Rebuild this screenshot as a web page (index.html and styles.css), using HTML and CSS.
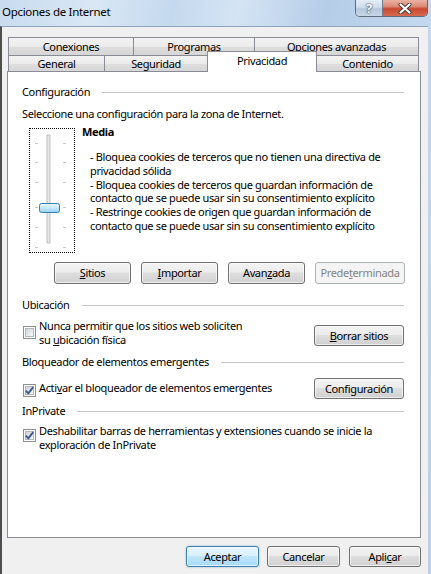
FILE: index.html
```html
<!DOCTYPE html>
<html lang="es">
<head>
<meta charset="utf-8">
<title>Opciones de Internet</title>
<link rel="stylesheet" href="styles.css">
</head>
<body>
<div class="window">
  <div class="titlebar">
    <span class="title">Opciones de Internet</span>
    <div class="caption-buttons">
      <div class="cap help">?</div>
      <div class="cap close">
        <svg width="14" height="11" viewBox="0 0 14 11">
          <path d="M2.5 1.5 L11.5 9.5 M11.5 1.5 L2.5 9.5" stroke="#3a3a3a" stroke-width="4" stroke-linecap="round"/>
          <path d="M2.5 1.5 L11.5 9.5 M11.5 1.5 L2.5 9.5" stroke="#ffffff" stroke-width="2.2" stroke-linecap="round"/>
        </svg>
      </div>
    </div>
  </div>
  <div class="client">
    <div class="tabs">
      <div class="tabrow back">
        <div class="tab t-con">Conexiones</div>
        <div class="tab t-pro">Programas</div>
        <div class="tab t-opc">Opciones avanzadas</div>
      </div>
      <div class="tabrow front">
        <div class="tab t-gen">General</div>
        <div class="tab t-seg">Seguridad</div>
        <div class="tab t-pri selected">Privacidad</div>
        <div class="tab t-cnt">Contenido</div>
      </div>
    </div>
    <div class="panel">
      <div class="group-head"><span>Configuración</span><i class="rule"></i></div>
      <p class="intro">Seleccione una configuración para la zona de Internet.</p>
      <div class="level">
        <div class="slider">
          <svg width="44" height="123" viewBox="0 0 44 123">
            <g stroke="#c9c9c9" stroke-width="1">
              <path d="M5 14.5 H8 M33 14.5 H36"/>
              <path d="M5 33.5 H8 M33 33.5 H36"/>
              <path d="M5 53.5 H8 M33 53.5 H36"/>
              <path d="M5 78.5 H8 M33 78.5 H36"/>
              <path d="M5 98.5 H8 M33 98.5 H36"/>
              <path d="M5 118.5 H8 M33 118.5 H36"/>
            </g>
            <rect x="17" y="6" width="3" height="108" fill="#e7e7e7" stroke="#b5b5b5" stroke-width="0.8"/>
            <defs>
              <linearGradient id="thumb" x1="0" y1="0" x2="0" y2="1">
                <stop offset="0" stop-color="#eaf7fe"/>
                <stop offset="0.5" stop-color="#c4e8fb"/>
                <stop offset="1" stop-color="#8fd1f4"/>
              </linearGradient>
            </defs>
            <rect x="9.5" y="74.5" width="20" height="9" rx="2" fill="url(#thumb)" stroke="#3c7fb1"/>
          </svg>
        </div>
        <div class="level-text">
          <div class="level-name">Media</div>
          <div class="level-desc">- Bloquea cookies de terceros que no tienen una directiva de<br>privacidad sólida<br>- Bloquea cookies de terceros que guardan información de<br>contacto que se puede usar sin su consentimiento explícito<br>- Restringe cookies de origen que guardan información de<br>contacto que se puede usar sin su consentimiento explícito</div>
        </div>
      </div>
      <div class="btnrow">
        <div class="btn b-sit"><u>S</u>itios</div>
        <div class="btn b-imp"><u>I</u>mportar</div>
        <div class="btn b-ava">Avan<u>z</u>ada</div>
        <div class="btn b-pre disabled">Prede<u>t</u>erminada</div>
      </div>

      <div class="group-head sec-ubi"><span>Ubicación</span><i class="rule"></i></div>
      <div class="optrow row-ubi">
        <div class="check two-line">
          <span class="cb"><span class="cb-in"></span></span>
          <span class="check-label">Nunca permitir que los sitios web soliciten<br>su <u>u</u>bicación física</span>
        </div>
        <div class="btn side-btn b-borrar"><u>B</u>orrar sitios</div>
      </div>

      <div class="group-head sec-blo"><span>Bloqueador de elementos emergentes</span><i class="rule"></i></div>
      <div class="optrow row-act">
        <div class="check one-line">
          <span class="cb"><span class="cb-in"><svg width="9" height="9" viewBox="0 0 9 9"><path d="M0.8 4.6 L3.3 7.4 L8.2 1.2" fill="none" stroke="#3d5a94" stroke-width="1.9" stroke-linejoin="round"/></svg></span></span>
          <span class="check-label">Acti<u>v</u>ar el bloqueador de elementos emergentes</span>
        </div>
        <div class="btn side-btn b-conf">Confi<u>g</u>uración</div>
      </div>

      <div class="group-head sec-inp"><span>InPrivate</span><i class="rule"></i></div>
      <div class="optrow row-inp">
        <div class="check two-line">
          <span class="cb"><span class="cb-in"><svg width="9" height="9" viewBox="0 0 9 9"><path d="M0.8 4.6 L3.3 7.4 L8.2 1.2" fill="none" stroke="#3d5a94" stroke-width="1.9" stroke-linejoin="round"/></svg></span></span>
          <span class="check-label">Deshabilitar barras de herramientas y extensiones cuando se inicie la<br>exploración de InPrivate</span>
        </div>
      </div>
    </div>
    <div class="dialog-buttons">
      <div class="btn default b-ok">Aceptar</div>
      <div class="btn b-cancel">Cancelar</div>
      <div class="btn b-apply">Apli<u>c</u>ar</div>
    </div>
  </div>
</div>
</body>
</html>
```

FILE: styles.css
```css
* { box-sizing: border-box; }
html, body { margin: 0; padding: 0; }
body {
  font-family: "Noto Sans", "Open Sans", sans-serif;
  font-size: 11px;
  letter-spacing: -0.35px;
  color: #000;
  background: #c5d9ee;
}
u { text-decoration: underline; text-underline-offset: 1px; }

.window {
  width: 431px;
  height: 574px;
  display: flex;
  flex-direction: column;
  overflow: hidden;
  background: linear-gradient(180deg, #c3d8ee 0%, #b9d0ea 100%);
}

/* Title bar */
.titlebar {
  flex: none;
  height: 26px;
  display: flex;
  align-items: flex-start;
  background: linear-gradient(100deg, #c8dbef 0%, #d9e7f5 22%, #c5d9ee 40%, #d4e4f4 55%, #b6cde8 75%, #c4d8ee 100%);
}
.title {
  padding: 4px 0 0 2px;
  line-height: 16px;
  font-size: 11.5px;
  letter-spacing: -0.3px;
  color: #000;
}
.caption-buttons {
  margin-left: auto;
  margin-right: 3px;
  display: flex;
  height: 17px;
  border: 1px solid #5d6c7d;
  border-top: none;
  border-radius: 0 0 5px 5px;
  overflow: hidden;
}
.cap {
  display: flex;
  align-items: center;
  justify-content: center;
}
.cap.help {
  width: 27px;
  background: linear-gradient(180deg, #e4edf6 0%, #d1deec 45%, #b4c7dc 55%, #c9d8e9 100%);
  border-right: 1px solid #6f7e90;
  color: #fff;
  font-weight: bold;
  font-size: 13px;
  letter-spacing: 0;
  text-shadow: 0 0 2px #2b3a4d, 0 0 1px #2b3a4d;
  line-height: 15px;
}
.cap.close {
  width: 44px;
  background: linear-gradient(180deg, #eab2a4 0%, #dc8a76 40%, #c9472f 55%, #d66a4f 100%);
}

/* Client */
.client {
  flex: 1;
  display: flex;
  flex-direction: column;
  background: #f0f0f0;
  border-top: 1px solid #8ea4bb;
  border-left: 2px solid #4d4d4d;
  margin-right: 3px;
  padding: 10px 7px 0 5px;
}

/* Tabs */
.tabs { flex: none; }
.tabrow {
  display: flex;
  padding-left: 1px;
}
.tabrow.back { height: 18px; }
.tabrow.front {
  height: 16px;
  align-items: flex-end;
}
.tab {
  border: 1px solid #898c95;
  border-bottom: none;
  margin-left: -1px;
  text-align: center;
  background: linear-gradient(180deg, #f3f3f3 0%, #ebebeb 50%, #dedede 51%, #d6d6d6 100%);
  line-height: 16px;
  white-space: nowrap;
}
.tab:first-child { margin-left: 0; }
.tabrow.back .tab { height: 18px; line-height: 17px; }
.tabrow.front .tab { height: 16px; line-height: 15px; }
.t-con { width: 126px; }
.t-pro { width: 122px; }
.t-opc { width: 165px; }
.t-gen { width: 97px; }
.t-seg { width: 104px; }
.t-pri { width: 110px; }
.t-cnt { width: 103px; }
.tabrow.front .tab.selected {
  height: 21px;
  margin-bottom: -1px;
  background: #fff;
  position: relative;
  z-index: 2;
  line-height: 17px;
}

/* Panel */
.panel {
  flex: none;
  height: 467px;
  border: 1px solid #898c95;
  background: #fff;
  padding: 13px 16px 0 14px;
}
.group-head {
  display: flex;
  align-items: center;
  height: 14px;
  line-height: 14px;
  white-space: nowrap;
}
.rule {
  flex: 1;
  height: 0;
  border-top: 1px solid #c6c6c6;
  margin-left: 12px;
  margin-top: 1px;
}
.intro {
  margin: 8px 0 0 0;
  line-height: 14px;
  white-space: nowrap;
}

.level {
  display: flex;
  margin-top: 4px;
}
.slider {
  flex: none;
  width: 46px;
  height: 125px;
  margin: 3px 0 0 7px;
  border: 1px dotted #000;
}
.slider svg { display: block; }
.level-text { margin-left: 7px; }
.level-name {
  font-weight: bold;
  line-height: 14px;
}
.level-desc {
  margin: 11px 0 0 8px;
  line-height: 13.8px;
  white-space: nowrap;
}

/* Buttons */
.btn {
  flex: none;
  height: 22px;
  border: 1px solid #707070;
  border-radius: 3px;
  background: linear-gradient(180deg, #f3f3f3 0%, #ececec 45%, #dedede 50%, #d0d0d0 100%);
  box-shadow: inset 0 0 0 1px rgba(255, 255, 255, 0.65);
  text-align: center;
  line-height: 19px;
  white-space: nowrap;
}
.btn.disabled {
  border-color: #adb2b5;
  background: #f4f4f4;
  box-shadow: none;
  color: #838383;
}
.btn.default {
  border-color: #3c7fb1;
  background: linear-gradient(180deg, #eaf6fd 0%, #d9f0fc 45%, #bee6fd 50%, #a7d9f5 100%);
  box-shadow: inset 0 0 0 1px rgba(255, 255, 255, 0.7), 0 0 2px rgba(60, 127, 177, 0.6);
}
.btnrow {
  display: flex;
  margin: 9px 0 0 32px;
  gap: 10px;
}
.b-sit, .b-imp, .b-ava { width: 77px; }
.b-pre { width: 90px; }

.sec-ubi { margin-top: 14px; }
.optrow {
  display: flex;
  align-items: flex-start;
}
.check {
  display: flex;
  align-items: flex-start;
  margin-left: 1px;
}
.check-label {
  margin-left: 3px;
  line-height: 13.5px;
  white-space: nowrap;
}
.cb {
  flex: none;
  width: 13px;
  height: 13px;
  border: 1px solid #8e8f8f;
  background: #fff;
  padding: 1px;
  display: flex;
}
.cb-in {
  width: 9px;
  height: 9px;
  border: 1px solid #b4b8be;
  background: linear-gradient(135deg, #cfd3d8 0%, #e9ebed 60%, #f8f8f8 100%);
  display: flex;
  align-items: center;
  justify-content: center;
  overflow: visible;
}
.cb-in svg { flex: none; margin: -1px; }
.side-btn {
  margin-left: auto;
  width: 90px;
  height: 21px;
}

.row-ubi { margin-top: 7px; }
.row-ubi .cb { margin-top: 7px; }
.row-ubi .side-btn { margin-top: 6px; }

.sec-blo { margin-top: 9px; }
.row-act { margin-top: 9px; }
.row-act .check { margin-top: 3px; }
.row-act .check-label { line-height: 14px; }
.row-act .cb { margin-top: 3px; }

.sec-inp { margin-top: 5px; }
.row-inp { margin-top: 6px; }
.row-inp .check-label { line-height: 14px; }
.row-inp .cb { margin-top: 5px; }

/* Dialog buttons */
.dialog-buttons {
  flex: none;
  display: flex;
  justify-content: flex-end;
  margin-top: 8px;
}
.dialog-buttons .btn { height: 21px; }
.b-ok { width: 73px; }
.b-cancel { width: 73px; margin-left: 8px; }
.b-apply { width: 72px; margin-left: 9px; }
```
